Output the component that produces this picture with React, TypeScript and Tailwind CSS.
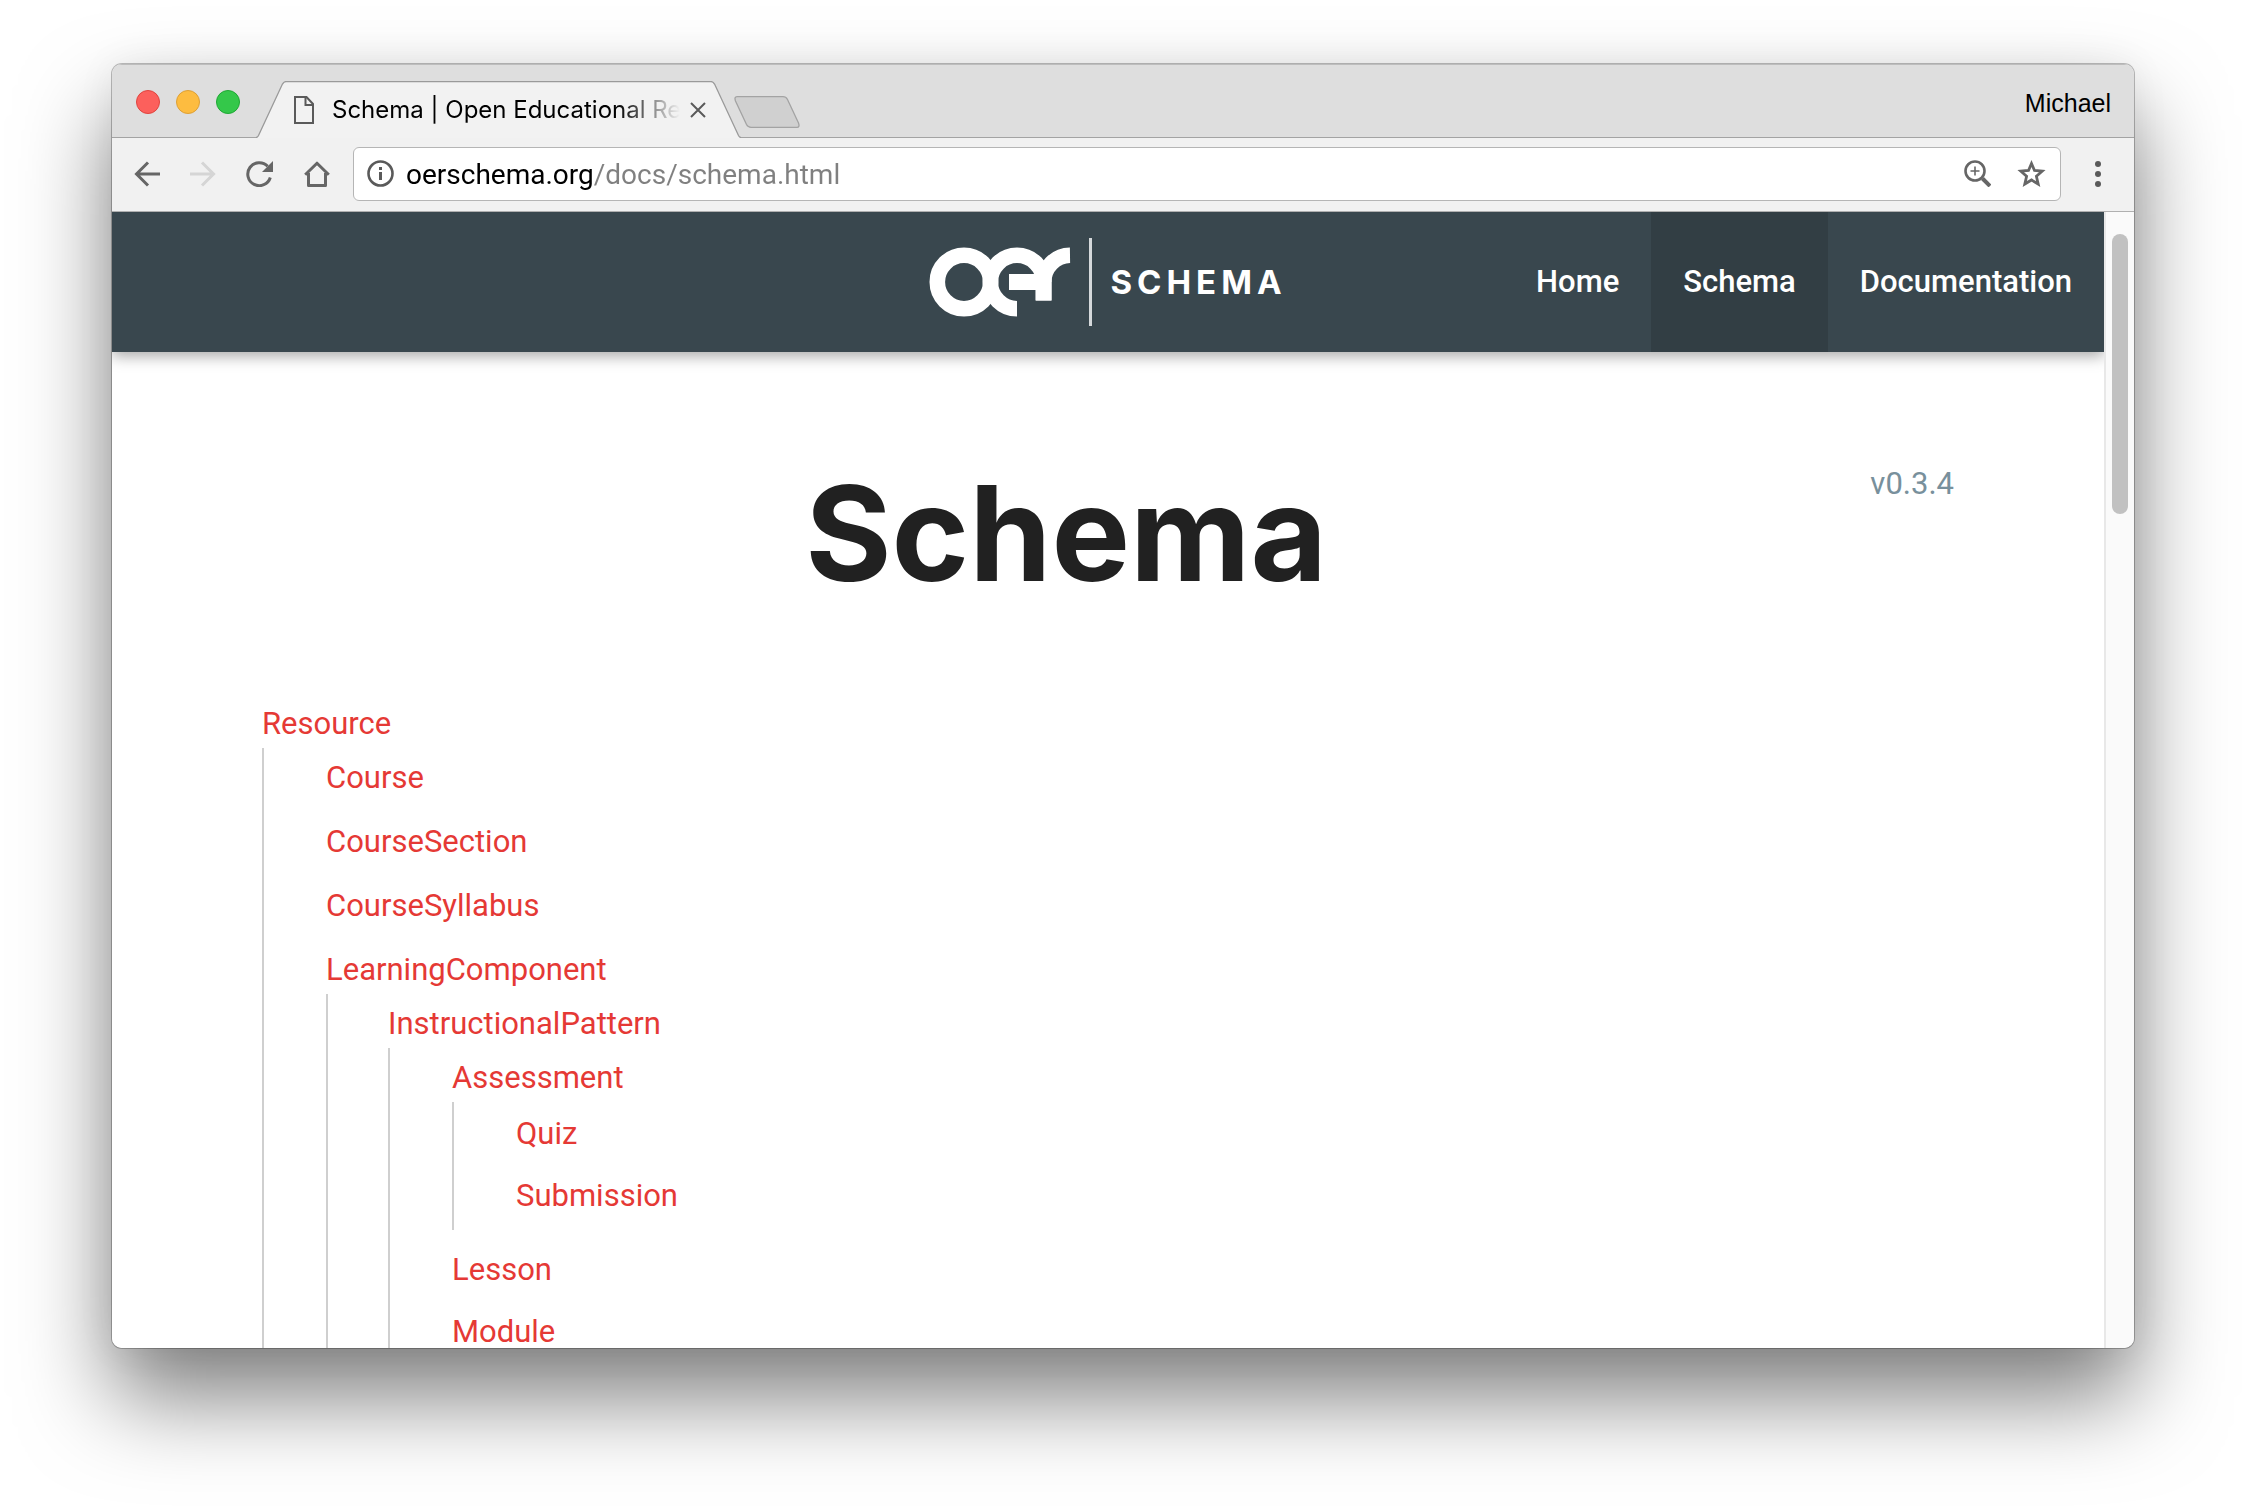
import React from "react";

type Node = { name: string; list?: string; children?: Node[] };

const tree: Node = {
  name: "Resource",
  list: "gap-[10px] pl-[62px]",
  children: [
    { name: "Course" },
    { name: "CourseSection" },
    { name: "CourseSyllabus" },
    {
      name: "LearningComponent",
      list: "gap-[10px] pl-[60px]",
      children: [
        {
          name: "InstructionalPattern",
          list: "gap-2 pl-[62px]",
          children: [
            {
              name: "Assessment",
              list: "gap-2 pl-[62px] pt-[2px] pb-[10px] mb-[2px]",
              children: [{ name: "Quiz" }, { name: "Submission" }],
            },
            { name: "Lesson" },
            { name: "Module" },
          ],
        },
      ],
    },
  ],
};

function Tree({ node }: { node: Node }) {
  return (
    <li>
      <a href="#" className="block w-max pt-[11px] pb-[5px] text-[31px] leading-[38px] text-[#e53935]">
        {node.name}
      </a>
      {node.children && (
        <ul className={"flex flex-col border-l-2 border-[#cfcfcf] " + (node.list ?? "")}>
          {node.children.map((c) => (
            <Tree key={c.name} node={c} />
          ))}
        </ul>
      )}
    </li>
  );
}

function TitleBar() {
  return (
    <div className="flex h-[74px] shrink-0 items-stretch bg-[#dedede] shadow-[inset_0_-1px_0_#a3a3a3,inset_0_1px_0_#bdbdbd]">
      <div className="flex items-center gap-4 pl-6 pt-[2px]">
        <button aria-label="Close window" className="size-6 rounded-full border border-[#e0443e] bg-[#fc605c]" />
        <button aria-label="Minimise window" className="size-6 rounded-full border border-[#dea035] bg-[#fdbc40]" />
        <button aria-label="Zoom window" className="size-6 rounded-full border border-[#1fa834] bg-[#34c84a]" />
      </div>
      <div className="relative ml-4 flex w-[485px] items-end">
        <svg viewBox="0 0 486 57" className="absolute bottom-0 left-0 h-[57px] w-[485px]" aria-hidden="true">
          <path
            d="M0 56.5H1Q2 56 3 54L26.500 3.500Q28 .5 30 .5H456Q458 .5 459.500 3.500L483 54Q484 56.500 485 56.500V57H0Z"
            fill="#f2f2f2"
          />
          <path
            d="M0 56.500Q1.500 56.500 2.500 54.500L26.500 3Q28 .5 30 .5H456Q458 .5 459.500 3L483.500 54.500Q484.500 56.500 486 56.500"
            fill="none"
            stroke="#9a9a9a"
            strokeWidth="1.300"
          />
        </svg>
        <div className="relative flex h-[56px] w-full items-center pl-[38px]">
          <svg width="20" height="28" viewBox="0 0 20 28" fill="none" stroke="#5a5a5a" strokeWidth="2" aria-hidden="true">
            <path d="M1 1H12.500L19 8V27H1Z" />
            <path d="M11.500 1V9H19" />
          </svg>
          <div
            title="Schema | Open Educational Resources"
            className="ml-[18px] w-[348px] whitespace-nowrap font-['Inter'] text-[24px] leading-8 text-black [mask-image:linear-gradient(90deg,#000_82%,transparent)]"
          >
            Schema | Open Educational Re
          </div>
          <button aria-label="Close tab" className="ml-[10px]">
            <svg width="16" height="16" viewBox="0 0 16 16" stroke="#5a5a5a" strokeWidth="2" aria-hidden="true">
              <path d="M1 1L15 15M15 1L1 15" />
            </svg>
          </button>
        </div>
      </div>
      <button aria-label="New tab" className="mb-[10px] -ml-[7px] self-end">
        <svg width="66" height="32" viewBox="0 0 66 32" className="block" aria-hidden="true">
          <path
            d="M3 .7H49Q52 .7 53.500 3.500L64.500 27Q66 31.300 63 31.300H17Q14 31.300 12.500 28.500L1.500 5Q0 .7 3 .7Z"
            fill="#d0d0d0"
            stroke="#a3a3a3"
            strokeWidth="1.300"
          />
        </svg>
      </button>
      <button className="ml-auto self-center pr-[23px] pt-1 font-['Liberation_Sans'] text-[25px] leading-8 text-black">Michael</button>
    </div>
  );
}

function Toolbar() {
  return (
    <div className="flex h-[74px] shrink-0 items-center border-b border-[#b0b0b0] bg-[#f1f1f1] pr-[33px] pb-[2px] pl-[22px] text-[#666]">
      <div className="flex items-center gap-[30px]">
        <button aria-label="Back">
          <svg width="26" height="26" viewBox="0 0 26 26" fill="none" stroke="currentColor" strokeWidth="3" aria-hidden="true">
            <path d="M26 13H3M14 1.500L2.500 13L14 24.500" />
          </svg>
        </button>
        <button aria-label="Forward" disabled className="text-[#d5d5d5]">
          <svg width="26" height="26" viewBox="0 0 26 26" fill="none" stroke="currentColor" strokeWidth="3" aria-hidden="true">
            <path d="M0 13H23M12 1.500L23.500 13L12 24.500" />
          </svg>
        </button>
        <button aria-label="Reload">
          <svg width="28" height="26" viewBox="0 0 28 26" fill="none" aria-hidden="true">
            <path d="M21.700 5.300A11.500 11.500 0 1 0 24.300 16.500" stroke="currentColor" strokeWidth="3" />
            <path d="M27 0V11H16Z" fill="currentColor" />
          </svg>
        </button>
        <button aria-label="Home">
          <svg width="26" height="26" viewBox="0 0 26 26" fill="none" stroke="currentColor" strokeWidth="3" strokeLinejoin="round" aria-hidden="true">
            <path d="M1.200 13.800L13 2.200L24.800 13.800" />
            <path d="M4.500 12V24.500H21.500V12" />
          </svg>
        </button>
      </div>
      <div className="ml-[23px] flex h-[54px] flex-1 items-center rounded-md border border-[#b5b5b5] bg-white pr-[14px] pl-[13px]">
        <svg width="27" height="27" viewBox="0 0 27 27" fill="none" stroke="#5a5a5a" strokeWidth="2.600" aria-hidden="true">
          <circle cx="13.500" cy="13.500" r="12" />
          <path d="M13.500 12V20M13.500 7V10" strokeWidth="3" />
        </svg>
        <input
          type="text"
          aria-label="Address"
          defaultValue="oerschema.org/docs/schema.html"
          className="ml-3 min-w-0 flex-1 bg-[linear-gradient(90deg,#000_187px,#808080_187px)] bg-clip-text pt-[2px] text-[28px] leading-9 text-transparent caret-black outline-none"
        />
        <button aria-label="Zoom level">
          <svg width="27" height="27" viewBox="0 0 27 27" fill="none" stroke="currentColor" strokeWidth="2.600" aria-hidden="true">
            <circle cx="11" cy="11" r="9.500" />
            <path d="M18.500 18.500L26 26" strokeWidth="4" />
            <path d="M11 6.500V15.500M6.500 11H15.500" strokeWidth="1.600" />
          </svg>
        </button>
        <button aria-label="Bookmark this page" className="ml-[26px]">
          <svg width="29" height="28" viewBox="0 0 29 28" fill="none" stroke="currentColor" strokeWidth="2.800" aria-hidden="true">
            <path d="M14.500 3.500L17.500 10.500L25.200 11.200L19.400 16.300L21.200 24L14.500 20L7.800 24L9.600 16.300L3.800 11.200L11.500 10.500Z" />
          </svg>
        </button>
      </div>
      <button aria-label="Menu" className="ml-[34px]">
        <svg width="6" height="26" viewBox="0 0 6 26" fill="#5a5a5a" aria-hidden="true">
          <circle cx="3" cy="3" r="3" />
          <circle cx="3" cy="13" r="3" />
          <circle cx="3" cy="23" r="3" />
        </svg>
      </button>
    </div>
  );
}

function Logo() {
  return (
    <a href="#" aria-label="OER Schema" className="flex items-center">
      <svg width="142" height="70" viewBox="0 0 142 70" fill="none" aria-hidden="true">
        <circle cx="35" cy="35" r="26.700" stroke="#fff" strokeWidth="15.600" />
        <path d="M88 61.700A26.700 26.700 0 1 1 114.700 35" stroke="#fff" strokeWidth="15.600" />
        <path d="M80 27H122.500V53.500H106.500V43H80Z" fill="#fff" />
        <path d="M114.700 53.500V35A26.700 26.700 0 0 1 141 8.300" stroke="#fff" strokeWidth="15.600" />
      </svg>
      <span className="ml-[18px] h-[88px] w-[3px] bg-[#d5d9db]" />
      <span className="ml-[18px] font-['Inter'] text-[33px] leading-10 font-bold tracking-[5px] text-white">SCHEMA</span>
    </a>
  );
}

const nav = [
  { label: "Home", active: false },
  { label: "Schema", active: true },
  { label: "Documentation", active: false },
];

export default function App() {
  return (
    <div className="flex h-screen flex-col bg-white px-28 pt-16 pb-40 font-['Roboto',sans-serif]">
      <div className="flex min-h-0 flex-1 flex-col overflow-hidden rounded-[10px] shadow-[0_0_0_1px_rgba(0,0,0,0.25),0_50px_90px_rgba(0,0,0,0.5),0_0_40px_rgba(0,0,0,0.06)]">
        <TitleBar />
        <Toolbar />
        <div className="flex min-h-0 flex-1">
          <div className="min-w-0 flex-1 overflow-hidden bg-white">
            <header className="grid h-[140px] grid-cols-[1fr_auto_1fr] items-stretch bg-[#39474e] shadow-[0_4px_14px_rgba(0,0,0,0.35)]">
              <div />
              <Logo />
              <nav className="flex justify-end text-[31px] leading-10 font-medium text-white">
                {nav.map((n) => (
                  <a key={n.label} href="#" className={"flex items-center px-8 " + (n.active ? "bg-[#323e44]" : "")}>
                    {n.label}
                  </a>
                ))}
              </nav>
            </header>
            <main className="px-[150px] pt-[110px]">
              <div className="flex items-start">
                <h1 className="flex-1 text-center font-['Inter'] text-[132px] leading-[142px] font-bold text-[#212121]">Schema</h1>
                <span className="pt-[2px] text-[31px] leading-10 text-[#78909c]">v0.3.4</span>
              </div>
              <ul className="mt-[90px]">
                <Tree node={tree} />
              </ul>
            </main>
          </div>
          <div className="flex w-[30px] shrink-0 justify-center border-l-2 border-[#e8e8e8] bg-[#fafafa] pt-[22px]">
            <div className="h-[280px] w-4 rounded-full bg-[#c1c1c1]" />
          </div>
        </div>
      </div>
    </div>
  );
}
